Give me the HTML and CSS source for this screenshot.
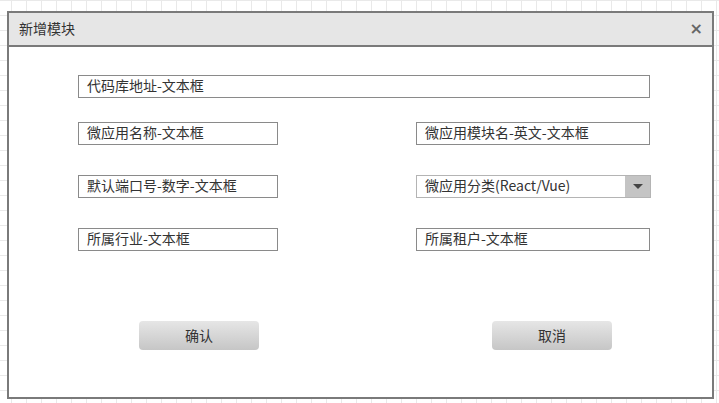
FILE: index.html
```html
<!DOCTYPE html>
<html lang="zh">
<head>
<meta charset="utf-8">
<title>新增模块</title>
<link rel="stylesheet" href="styles.css">
</head>
<body>
<div class="dialog">
  <div class="dialog-header">
    <span class="title">新增模块</span>
    <span class="close">×</span>
  </div>
  <div class="dialog-body">
    <div class="row first">
      <div class="field full">代码库地址-文本框</div>
    </div>
    <div class="row r2">
      <div class="field left">微应用名称-文本框</div>
      <div class="field right">微应用模块名-英文-文本框</div>
    </div>
    <div class="row r3">
      <div class="field left">默认端口号-数字-文本框</div>
      <div class="field select">
        <span class="select-text">微应用分类(React/Vue)</span>
        <span class="select-btn"><span class="caret"></span></span>
      </div>
    </div>
    <div class="row r4">
      <div class="field left">所属行业-文本框</div>
      <div class="field right">所属租户-文本框</div>
    </div>
    <div class="actions">
      <div class="btn">确认</div>
      <div class="btn">取消</div>
    </div>
  </div>
</div>
</body>
</html>
```
FILE: styles.css
```css
html, body {
  margin: 0;
  padding: 0;
}
body {
  width: 719px;
  height: 403px;
  overflow: hidden;
  font-family: "Noto Sans CJK SC", "Liberation Sans", sans-serif;
  color: #333;
  background-color: #fff;
  background-image:
    linear-gradient(to right, #e9e9e9 1px, transparent 1px),
    linear-gradient(to bottom, #e9e9e9 1px, transparent 1px);
  background-size: 15px 15px;
  background-position: 11px 0;
  padding: 11px 0 0 7px;
  box-sizing: border-box;
}
.dialog {
  width: 707px;
  height: 388px;
  box-sizing: border-box;
  border: 2px solid #7a7a7a;
  background: #fff;
  display: flex;
  flex-direction: column;
}
.dialog-header {
  height: 34px;
  box-sizing: border-box;
  background: #e6e6e6;
  border-bottom: 2px solid #7a7a7a;
  display: flex;
  align-items: center;
  justify-content: space-between;
  padding: 0 9px 0 10px;
}
.title {
  font-size: 14px;
  color: #333;
  line-height: 20px;
  margin-top: -2px;
}
.close {
  font-family: "DejaVu Sans", sans-serif;
  font-size: 16px;
  font-weight: bold;
  color: #666;
  line-height: 1;
}
.dialog-body {
  flex: 1;
  padding: 28px 62px 0 69px;
  display: flex;
  flex-direction: column;
}
.row {
  display: flex;
  justify-content: space-between;
  width: 572px;
}
.r2 { margin-top: 24px; }
.r3 { margin-top: 30px; }
.r4 { margin-top: 30px; }
.field {
  height: 23px;
  box-sizing: border-box;
  border: 1px solid #8a8a8a;
  background: #fff;
  font-size: 14px;
  line-height: 19px;
  padding-left: 8px;
  color: #333;
  white-space: nowrap;
}
.full { width: 572px; }
.left { width: 200px; }
.right { width: 234px; }
.select {
  width: 235px;
  margin-right: -1px;
  display: flex;
  padding-left: 0;
  border-color: #b4b4b4;
}
.select-text {
  flex: 1;
  padding-left: 8px;
}
.select-btn {
  width: 25px;
  background: #c4c4c4;
  display: flex;
  align-items: center;
  justify-content: center;
}
.caret {
  width: 0;
  height: 0;
  border-left: 5px solid transparent;
  border-right: 5px solid transparent;
  border-top: 5px solid #444;
}
.actions {
  display: flex;
  justify-content: space-between;
  padding: 0 38px 0 61px;
  margin-top: 70px;
}
.btn {
  width: 120px;
  height: 29px;
  border-radius: 4px;
  background: linear-gradient(to bottom, #e6e6e6, #c6c6c6);
  font-size: 14px;
  line-height: 28px;
  text-align: center;
  color: #333;
}
```
